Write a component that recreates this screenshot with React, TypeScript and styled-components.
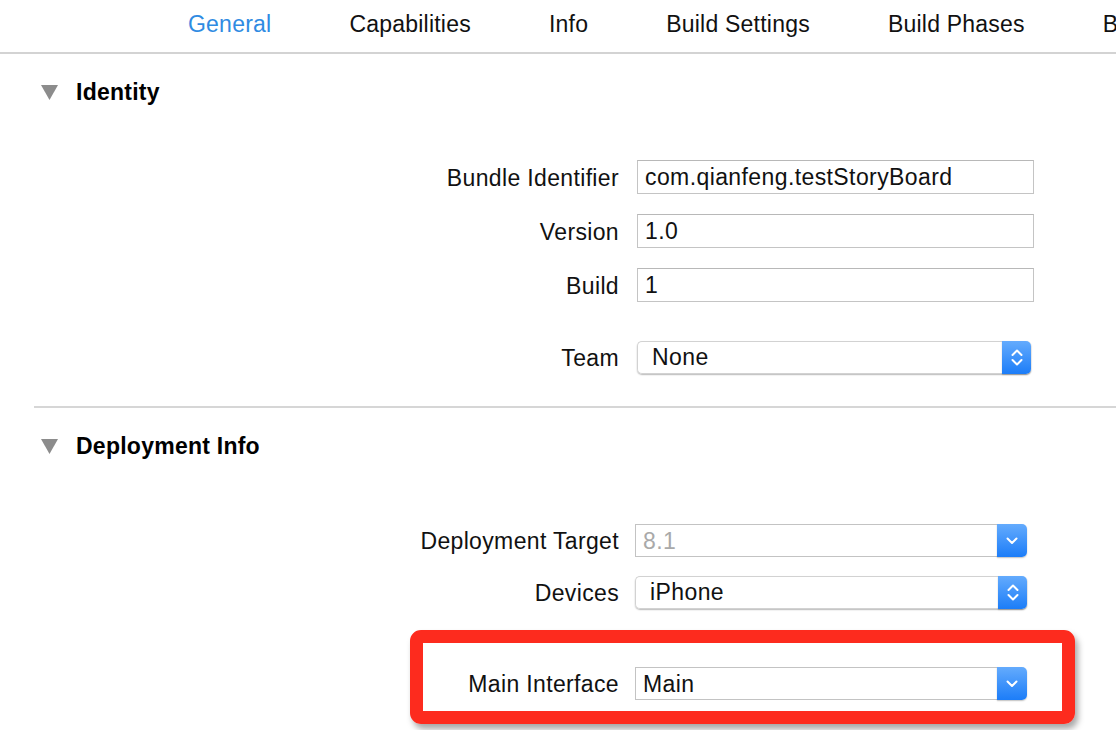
import React from 'react';
import styled, { createGlobalStyle } from 'styled-components';

const GlobalStyle = createGlobalStyle`
  html, body {
    margin: 0;
    padding: 0;
    background: #fff;
  }
  body {
    font-family: "Liberation Sans", Helvetica, Arial, sans-serif;
    color: #111;
  }
`;

const Page = styled.div`
  width: 1116px;
  height: 730px;
  overflow: hidden;
  background: #fff;
`;

const TabBar = styled.nav`
  display: flex;
  align-items: center;
  gap: 78px;
  height: 48px;
  padding: 0 0 4px 188px;
  border-bottom: 2px solid #d3d3d3;
  white-space: nowrap;
  overflow: hidden;
`;

const Tab = styled.span<{ $active?: boolean }>`
  flex-shrink: 0;
  font-size: 23px;
  letter-spacing: 0.22px;
  color: ${p => (p.$active ? '#2f8be2' : '#111')};
`;

const SectionHeader = styled.div`
  display: flex;
  align-items: center;
  gap: 18px;
  height: 28px;
  margin-top: 24px;
  padding-left: 41px;
  font-size: 23px;
  font-weight: bold;
  letter-spacing: 0.25px;
  color: #000;
`;

const Divider = styled.hr`
  margin: 32px 0 0 34px;
  border: none;
  border-top: 2px solid #d6d6d6;
`;

const Form = styled.div<{ $top: number; $gap: number }>`
  display: flex;
  flex-direction: column;
  gap: ${p => p.$gap}px;
  margin-top: ${p => p.$top}px;
`;

const FieldRow = styled.div<{ $labelW: number; $fieldW: number; $gap: number; $top?: number }>`
  display: grid;
  grid-template-columns: ${p => p.$labelW}px ${p => p.$fieldW}px;
  column-gap: ${p => p.$gap}px;
  align-items: center;
  margin-top: ${p => p.$top ?? 0}px;
`;

const Label = styled.label`
  padding-top: 2px;
  text-align: right;
  font-size: 23px;
  letter-spacing: 0.35px;
  color: #111;
  white-space: nowrap;
`;

const TextField = styled.div`
  box-sizing: border-box;
  height: 34px;
  padding-left: 7px;
  display: flex;
  align-items: center;
  border: 1px solid #c4c4c4;
  border-top-color: #b8b8b8;
  font-size: 23px;
  letter-spacing: 0.4px;
  color: #111;
  white-space: nowrap;
`;

const Popup = styled.div<{ $combo?: boolean }>`
  display: flex;
  height: 33px;
  border-radius: ${p => (p.$combo ? '0 5px 5px 0' : '5px')};
  box-shadow: ${p => (p.$combo ? 'none' : '0 1px 1.5px rgba(0,0,0,0.28)')};
`;

const PopupBody = styled.div<{ $combo?: boolean; $disabled?: boolean }>`
  flex: 1;
  box-sizing: border-box;
  display: flex;
  align-items: center;
  padding: ${p => (p.$combo ? '2px 0 0 7px' : '0 0 0 14px')};
  border: 1px solid ${p => (p.$combo ? '#c3c3c3' : '#d2d2d2')};
  border-right: none;
  border-radius: ${p => (p.$combo ? '0' : '5px 0 0 5px')};
  background: #fff;
  font-size: 23px;
  letter-spacing: 0.4px;
  color: ${p => (p.$disabled ? '#a9a9a9' : '#111')};
  white-space: nowrap;
`;

const PopupButton = styled.div<{ $w: number }>`
  width: ${p => p.$w}px;
  display: flex;
  align-items: center;
  justify-content: center;
  border-radius: 0 5px 5px 0;
  background: linear-gradient(#64abfd, #1c7df8);
  box-shadow: 0 1px 1.5px rgba(0,0,0,0.25);
`;

const Highlight = styled.div`
  width: 665px;
  box-sizing: border-box;
  margin: 21px 0 0 410px;
  padding: 24px 0 11px 0;
  border: 13px solid #fd2b1e;
  border-radius: 11px;
  box-shadow: 3px 5px 6px rgba(0,0,0,0.35);
`;

const Triangle = () => (
  <svg width="17" height="15" viewBox="0 0 17 15">
    <polygon points="0,0 17,0 8.5,15" fill="#8c8c8c" />
  </svg>
);

const UpDown = () => (
  <svg width="12" height="17" viewBox="0 0 12 17" fill="none" stroke="#fff" strokeWidth="2" strokeLinecap="round" strokeLinejoin="round">
    <polyline points="1.5,6 6,1.5 10.5,6" />
    <polyline points="1.5,11 6,15.5 10.5,11" />
  </svg>
);

const Down = () => (
  <svg width="12" height="8" viewBox="0 0 12 8" fill="none" stroke="#fff" strokeWidth="2" strokeLinecap="round" strokeLinejoin="round">
    <polyline points="1.5,1.5 6,6 10.5,1.5" />
  </svg>
);

interface SelectProps {
  value: string;
  combo?: boolean;
  disabled?: boolean;
  buttonW: number;
}

const Select: React.FC<SelectProps> = ({ value, combo, disabled, buttonW }) => (
  <Popup $combo={combo}>
    <PopupBody $combo={combo} $disabled={disabled}>{value}</PopupBody>
    <PopupButton $w={buttonW}>{combo ? <Down /> : <UpDown />}</PopupButton>
  </Popup>
);

const tabs = ['General', 'Capabilities', 'Info', 'Build Settings', 'Build Phases', 'Build Rules'];

const identityFields = [
  ['Bundle Identifier', 'com.qianfeng.testStoryBoard'],
  ['Version', '1.0'],
  ['Build', '1'],
];

export default function App() {
  return (
    <>
      <GlobalStyle />
      <Page>
        <TabBar>
          {tabs.map((t, i) => <Tab key={t} $active={i === 0}>{t}</Tab>)}
        </TabBar>

        <SectionHeader><Triangle />Identity</SectionHeader>
        <Form $top={54} $gap={20}>
          {identityFields.map(([label, value]) => (
            <FieldRow key={label} $labelW={619} $fieldW={397} $gap={18}>
              <Label>{label}</Label>
              <TextField>{value}</TextField>
            </FieldRow>
          ))}
        </Form>
        <FieldRow $labelW={619} $fieldW={394} $gap={18} $top={39}>
          <Label>Team</Label>
          <Select value="None" buttonW={29} />
        </FieldRow>

        <Divider />

        <SectionHeader><Triangle />Deployment Info</SectionHeader>
        <Form $top={64} $gap={19}>
          <FieldRow $labelW={619} $fieldW={392} $gap={16}>
            <Label>Deployment Target</Label>
            <Select value="8.1" combo disabled buttonW={30} />
          </FieldRow>
          <FieldRow $labelW={619} $fieldW={392} $gap={16}>
            <Label>Devices</Label>
            <Select value="iPhone" buttonW={29} />
          </FieldRow>
        </Form>
        <Highlight>
          <FieldRow $labelW={196} $fieldW={392} $gap={16}>
            <Label>Main Interface</Label>
            <Select value="Main" combo buttonW={30} />
          </FieldRow>
        </Highlight>
      </Page>
    </>
  );
}
